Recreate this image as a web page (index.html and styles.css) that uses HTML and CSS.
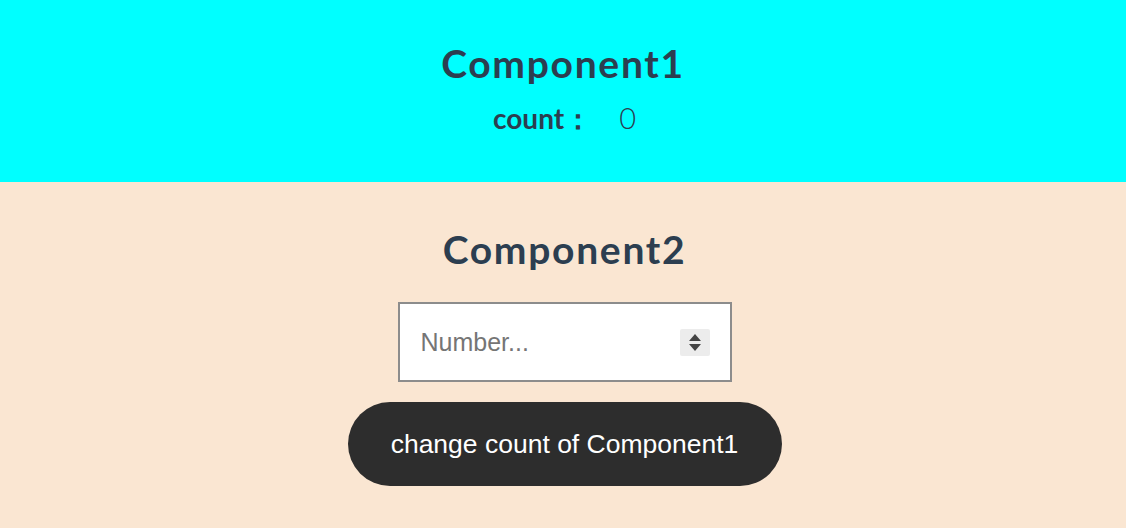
FILE: index.html
```html
<!DOCTYPE html>
<html>
<head>
<meta charset="utf-8">
<link rel="stylesheet" href="styles.css">
</head>
<body>
<div class="app">
  <section class="comp comp1">
    <h1 class="title">Component1</h1>
    <p class="count"><span class="count-label">count：</span><span class="count-value">0</span></p>
  </section>
  <section class="comp comp2">
    <h1 class="title">Component2</h1>
    <div class="number-input">
      <span class="placeholder">Number...</span>
      <span class="spinner">
        <svg width="14" height="20" viewBox="0 0 14 20"><polygon points="7,2 13,9 1,9" fill="#444"/><polygon points="1,12 13,12 7,19" fill="#444"/></svg>
      </span>
    </div>
    <button class="change-btn">change count of Component1</button>
  </section>
</div>
</body>
</html>
```
FILE: styles.css
```css
* { box-sizing: border-box; }
html, body { margin: 0; padding: 0; }
body { background: #fae6d2; font-family: Lato, "Noto Sans", sans-serif; color: #2c3e50; }
.app { display: flex; flex-direction: column; }
.comp { display: flex; flex-direction: column; align-items: center; }
.comp1 { background: #00ffff; height: 182px; padding-top: 37px; }
.comp2 { background: #fae6d2; padding-top: 41px; padding-left: 3px; }
.title { margin: 0; font-size: 39px; font-weight: 700; line-height: 52px; letter-spacing: 1.7px; }
.count { margin: 12px 0 0; font-size: 28px; line-height: 34px; display: flex; align-items: baseline; padding-left: 3px; }
.count-label { font-weight: 700; margin-right: 27px; }
.count-value { font-weight: 300; font-size: 29px; }
.number-input { margin-top: 27px; width: 334px; height: 80px; border: 2px solid #8c8c8c; background: #fff; display: flex; align-items: center; justify-content: space-between; padding: 0 20px 0 21px; }
.placeholder { font-family: "Liberation Sans", Arial, sans-serif; font-size: 25px; color: #757575; }
.spinner { width: 30px; height: 27px; background: #ececec; display: flex; align-items: center; justify-content: center; border-radius: 2px; }
.change-btn { margin-top: 20px; width: 434px; height: 84px; border: none; border-radius: 42px; background: #2d2d2d; color: #fff; font-family: "Liberation Sans", Arial, sans-serif; font-size: 26.5px; }
```
